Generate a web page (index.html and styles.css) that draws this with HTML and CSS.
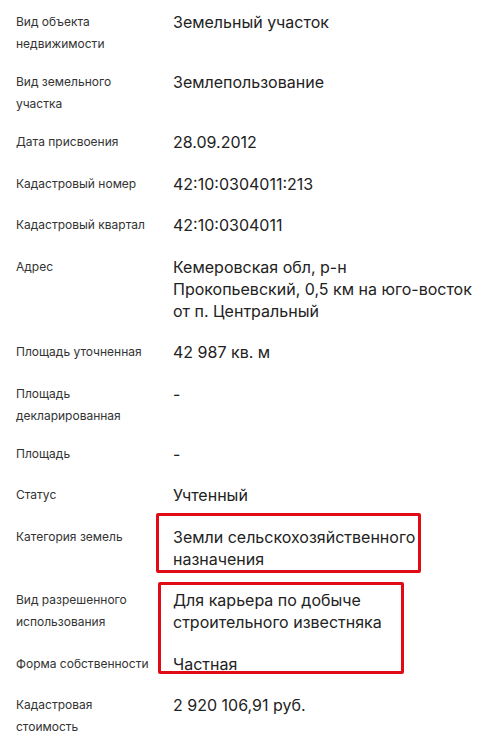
FILE: index.html
```html
<!DOCTYPE html>
<html lang="ru">
<head>
  <meta charset="UTF-8">
  <title>Сведения об объекте</title>
  <link rel="stylesheet" href="styles.css">
</head>
<body>

<div class="sheet">
  <div class="row">
    <div class="label">Вид объекта недвижимости</div>
    <div class="value">Земельный участок</div>
  </div>
  <div class="row">
    <div class="label">Вид земельного участка</div>
    <div class="value">Землепользование</div>
  </div>
  <div class="row">
    <div class="label">Дата присвоения</div>
    <div class="value">28.09.2012</div>
  </div>
  <div class="row">
    <div class="label">Кадастровый номер</div>
    <div class="value">42:10:0304011:213</div>
  </div>
  <div class="row">
    <div class="label">Кадастровый квартал</div>
    <div class="value">42:10:0304011</div>
  </div>
  <div class="row">
    <div class="label">Адрес</div>
    <div class="value">Кемеровская обл, р-н Прокопьевский, 0,5 км на юго-восток от п. Центральный</div>
  </div>
  <div class="row">
    <div class="label">Площадь уточненная</div>
    <div class="value">42 987 кв. м</div>
  </div>
  <div class="row">
    <div class="label">Площадь декларированная</div>
    <div class="value">-</div>
  </div>
  <div class="row">
    <div class="label">Площадь</div>
    <div class="value">-</div>
  </div>
  <div class="row">
    <div class="label">Статус</div>
    <div class="value">Учтенный</div>
  </div>
  <div class="row">
    <div class="label">Категория земель</div>
    <div class="value">Земли сельскохозяйственного назначения</div>
  </div>
  <div class="row">
    <div class="label">Вид разрешенного использования</div>
    <div class="value">Для карьера по добыче строительного известняка</div>
  </div>
  <div class="row">
    <div class="label">Форма собственности</div>
    <div class="value">Частная</div>
  </div>
  <div class="row">
    <div class="label">Кадастровая стоимость</div>
    <div class="value">2 920 106,91 руб.</div>
  </div>

  <!-- red marks drawn over the screenshot -->
  <div class="mark mark-category"></div>
  <div class="mark mark-usage"></div>
</div>

</body>
</html>
```

FILE: styles.css
```css
body {
  margin: 0;
  font-family: Inter, "Noto Sans", sans-serif;
  color: #222;
  background: #fff;
}
.sheet {
  position: relative;
  padding: 11px 6px 0 16px;
}
.row {
  display: grid;
  grid-template-columns: 157px 1fr;
  align-items: start;
  padding-bottom: 16px;
}
.label {
  font-size: 12px;
  line-height: 22px;
  color: #333;
  padding-right: 20px;
}
.value {
  font-size: 16px;
  line-height: 22px;
  padding-bottom: 3.5px;
}
.mark {
  position: absolute;
  border: 3px solid #e00b14;
  border-radius: 2px;
}
.mark-category {
  left: 156px;
  top: 513px;
  width: 259px;
  height: 54px;
}
.mark-usage {
  left: 158px;
  top: 582px;
  width: 240px;
  height: 86px;
}
```
